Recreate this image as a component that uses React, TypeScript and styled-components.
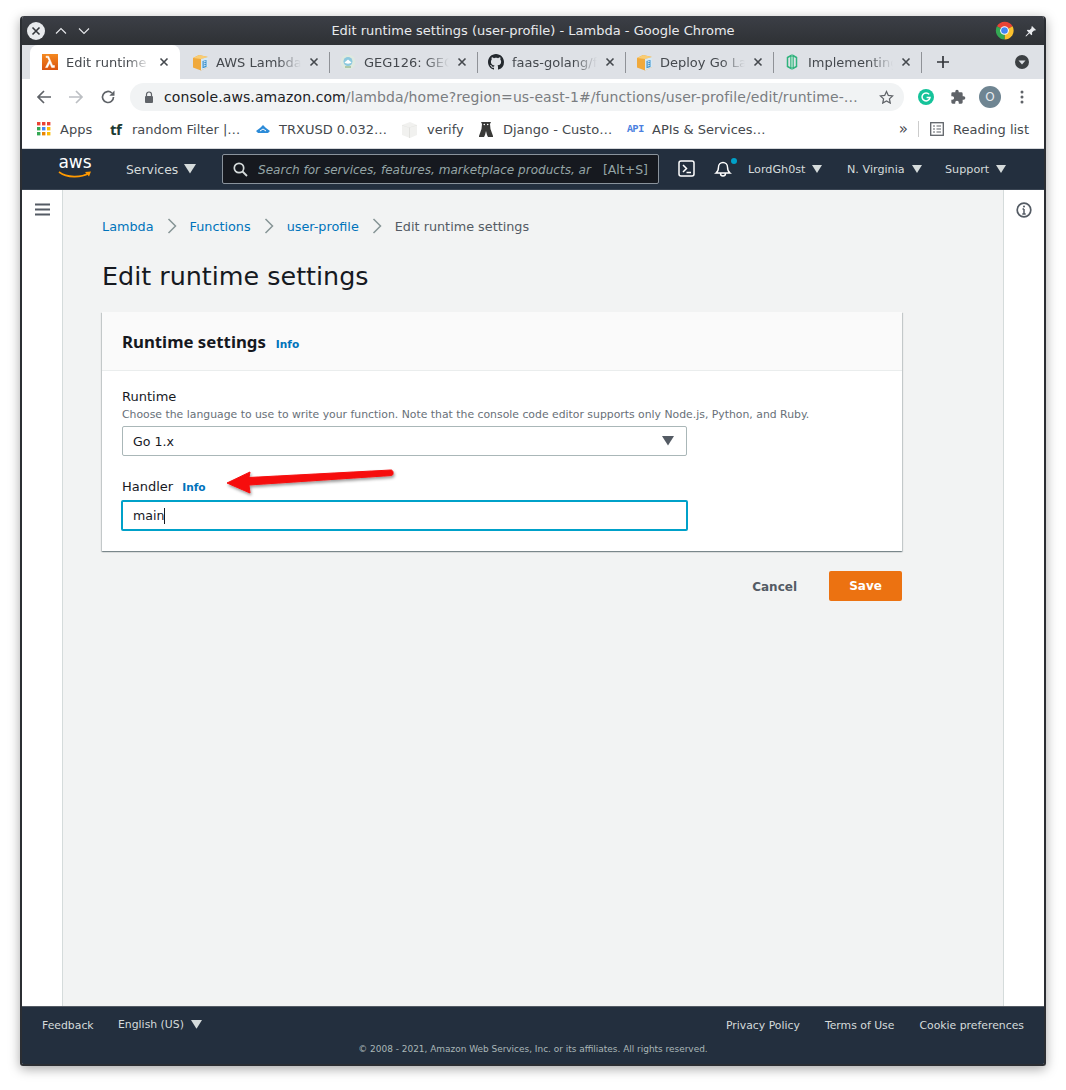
import React from "react";
import styled, { createGlobalStyle } from "styled-components";

const Global = createGlobalStyle`
  html, body { margin: 0; padding: 0; background: #fff; }
  body { font-family: "DejaVu Sans", sans-serif; }
  * { box-sizing: border-box; }
`;
const Page = styled.div`
  width: 1066px; height: 1090px; padding: 16px 20px 24px;
`;
const Shell = styled.div` border-radius: 4px; box-shadow: 0 3px 12px rgba(0,0,0,.35); width: 1026px; height: 1050px; `;
const Win = styled.div`
  width: 1026px; height: 1050px; display: flex; flex-direction: column;
  border: 2px solid #2b2e33; border-top: 0; border-radius: 4px 4px 3px 3px; overflow: hidden;
`;
const TitleBar = styled.div`
  height: 29px; flex: none; display: flex; align-items: center; padding: 0 7px 0 5px;
  background: linear-gradient(#3c3f46, #2e3135); color: #e8eaed; font-size: 13px;
`;
const TitleControls = styled.div` width: 170px; display: flex; align-items: center; gap: 9px; `;
const CloseCircle = styled.div`
  width: 18px; height: 18px; border-radius: 50%; background: #e8eaed; display: flex; align-items: center; justify-content: center;
`;
const TitleText = styled.div` flex: 1; text-align: center; white-space: nowrap; padding-left: 2px; `;
const TitleRight = styled.div` width: 170px; display: flex; justify-content: flex-end; align-items: center; gap: 11px; `;
const TabStrip = styled.div`
  height: 34px; flex: none; background: #dee1e6; display: flex; align-items: flex-end; padding-left: 8px; position: relative;
`;
const TabEl = styled.div<{ $active?: boolean }>`
  width: 148px; height: 34px; flex: none; display: flex; align-items: center; padding: 0 11px 0 10px; gap: 7px;
  font-size: 13px; color: #45494e; position: relative;
  background: ${p => (p.$active ? "#fff" : "transparent")};
  border-radius: ${p => (p.$active ? "8px 8px 0 0" : "0")};
  ${p => !p.$active && `&::after { content: ""; position: absolute; right: 0; top: 7px; height: 21px; width: 1px; background: #8f9297; }`}
`;
const TabFirst = styled(TabEl)` width: 150px; margin-right: 2px; padding: 0 11px 0 12px; gap: 8px; `;
const TabTitle = styled.span`
  flex: 1; overflow: hidden; white-space: nowrap; min-width: 0; margin-right: 1px;
  -webkit-mask-image: linear-gradient(90deg, #000 72%, transparent 100%);
  mask-image: linear-gradient(90deg, #000 72%, transparent 100%);
`;
const TabIcon = styled.span` width: 17px; height: 17px; flex: none; display: flex; align-items: center; `;
const TabTail = styled.div` flex: 1; display: flex; align-items: center; justify-content: space-between; height: 34px; padding: 0 14px 0 14px; `;
const Toolbar = styled.div` height: 36px; flex: none; background: #fff; display: flex; align-items: center; padding: 0 0 0 6px; `;
const NavIcon = styled.div` width: 32px; height: 32px; display: flex; align-items: center; justify-content: center; `;
const Omnibox = styled.div`
  width: 774px; height: 28px; margin-left: 6px; border-radius: 14px; background: #f1f3f4; display: flex; align-items: center;
  padding: 0 10px 0 14px; font-size: 14px; color: #7a7d81; white-space: nowrap;
`;
const UrlText = styled.span` flex: 1; margin-left: 10px; overflow: hidden; white-space: nowrap; letter-spacing: .1px; `;
const UrlHost = styled.span` color: #202124; `;
const ToolRight = styled.div` flex: 1; display: flex; align-items: center; padding-left: 6px; `;
const ToolCell = styled.div` width: 32px; display: flex; align-items: center; justify-content: center; `;
const Avatar = styled.div`
  width: 22px; height: 22px; border-radius: 50%; background: #6f8592; color: #e8eaed; font-size: 12px; display: flex; align-items: center; justify-content: center;
`;
const Bookmarks = styled.div`
  height: 34px; flex: none; background: #fff; display: flex; align-items: center; padding: 0 15px 5px 15px; font-size: 13px; color: #45494e;
  border-bottom: 1px solid #d5d7da;
`;
const Mark = styled.div<{ $w: number }>`
  width: ${p => p.$w}px; flex: none; display: flex; align-items: center; gap: 9px; white-space: nowrap;
`;
const TfLogo = styled.span` font-family: "Noto Sans", sans-serif; font-weight: 700; font-size: 15px; line-height: 14px; color: #1d3b33; width: 13px; letter-spacing: -.5px; `;
const ApiLogo = styled.span` font-family: "Liberation Mono", monospace; font-weight: 700; font-size: 10px; color: #4a7fe0; width: 16px; letter-spacing: -.4px; `;
const BookSpacer = styled.div` flex: 1; `;
const Chevrons = styled.span` font-size: 15px; margin-right: 10px; color: #45494e; `;
const BookDivider = styled.div` width: 1px; height: 16px; background: #ccc; margin-right: 11px; `;
const ReadingList = styled.div` display: flex; align-items: center; gap: 9px; `;
const AwsNav = styled.div`
  height: 41px; flex: none; background: #232f3e; border-bottom: 1px solid #3a4553; display: flex; align-items: center; color: #d5dbdb; font-size: 12px;
  padding-left: 36px;
`;
const AwsLogo = styled.div` width: 34px; height: 30px; display: flex; flex-direction: column; align-items: center; color: #fff; font-size: 17px; line-height: 17px; margin-top: -1px; `;
const Services = styled.div` margin-left: 34px; width: 96px; display: flex; align-items: center; gap: 6px; font-size: 12.4px; `;
const Search = styled.div`
  width: 437px; height: 30px; border: 1px solid #8a939c; border-radius: 2px; background: #16191f; display: flex; align-items: center;
  padding: 0 10px; gap: 10px; color: #95a5a6; font-size: 12.5px; white-space: nowrap;
`;
const SearchText = styled.span` font-style: italic; flex: 1; overflow: hidden; font-size: 12.05px; padding-top: 1px; `;
const SearchKey = styled.span` padding-top: 1px; `;
const NavRight = styled.div` display: flex; align-items: center; flex: 1; padding-left: 19px; `;
const BellWrap = styled.div` position: relative; margin-left: 18px; width: 20px; height: 20px; display: flex; `;
const Dot = styled.div` position: absolute; right: -3px; top: -1px; width: 6px; height: 6px; border-radius: 50%; background: #00a1c9; `;
const NavItem = styled.div<{ $w: number; $ml?: number }>` width: ${p => p.$w}px; margin-left: ${p => p.$ml ?? 0}px; display: flex; align-items: center; gap: 7px; font-size: 11.2px; `;
const Main = styled.div` flex: 1; display: flex; min-height: 0; `;
const LeftRail = styled.div` width: 41px; flex: none; background: #fff; border-right: 1px solid #d5dbdb; display: flex; justify-content: center; padding-top: 13px; `;
const RightRail = styled.div` width: 41px; flex: none; background: #fff; border-left: 1px solid #d5dbdb; display: flex; justify-content: center; padding-top: 12px; `;
const Content = styled.div` flex: 1; background: #f2f3f3; padding: 27px 39px; min-width: 0; `;
const Crumbs = styled.div` display: flex; align-items: center; font-size: 12.8px; height: 18px; color: #545b64; `;
const Crumb = styled.span` color: #0073bb; `;
const CrumbSep = styled.span` width: 36px; display: flex; justify-content: center; `;
const H1 = styled.h1` margin: 23px 0 0; font-size: 25.4px; font-weight: 400; color: #16191f; line-height: 36px; `;
const Card = styled.div` margin-top: 18px; width: 800px; background: #fff; box-shadow: 0 1px 1px 0 rgba(0,28,36,.3), 1px 1px 1px 0 rgba(0,28,36,.15), -1px 1px 1px 0 rgba(0,28,36,.15); position: relative; `;
const CardHead = styled.div` height: 59px; background: #fafafa; border-bottom: 1px solid #eaeded; display: flex; align-items: baseline; padding: 18px 0 0 20px; `;
const CardTitle = styled.div` font-family: "Noto Sans", sans-serif; font-size: 16.8px; font-weight: 700; color: #16191f; `;
const Info = styled.span<{ $ml: number }>` color: #0073bb; font-size: 10.6px; font-weight: 700; margin-left: ${p => p.$ml}px; `;
const CardBody = styled.div` padding: 17px 20px 20px; `;
const Label = styled.div` font-size: 13px; color: #16191f; line-height: 18px; display: flex; align-items: center; `;
const Hint = styled.div` font-size: 10.85px; color: #687078; line-height: 15px; margin-top: 1px; white-space: nowrap; `;
const SelectBox = styled.div`
  width: 565px; height: 30px; margin-top: 4px; border: 1px solid #aab7b8; border-radius: 2px; display: flex; align-items: center; justify-content: space-between;
  padding: 0 12px 0 10px; font-size: 12.6px; color: #16191f;
`;
const FieldGap = styled.div` height: 22px; `;
const InputBox = styled.div`
  width: 567px; height: 31px; margin: 4px 0 0 -1px; border: 2px solid #00a1c9; border-radius: 2px; display: flex; align-items: center;
  padding-left: 10px; font-size: 12.6px; color: #16191f;
`;
const Caret = styled.span` width: 1px; height: 16px; background: #16191f; `;
const Actions = styled.div` width: 800px; display: flex; justify-content: flex-end; align-items: center; margin-top: 20px; gap: 32px; `;
const Cancel = styled.span` font-size: 12px; font-weight: 700; color: #545b64; padding-top: 1px; `;
const Save = styled.div` width: 73px; height: 30px; background: #ec7211; border-radius: 2px; color: #fff; font-size: 12px; font-weight: 700; display: flex; align-items: center; justify-content: center; `;
const Arrow = styled.svg` position: absolute; left: 120px; top: 150px; `;
const Footer = styled.div` height: 58px; flex: none; background: #232f3e; border-top: 1px solid #545b64; color: #d5dbdb; font-size: 10.85px; padding: 0 20px; display: flex; flex-direction: column; `;
const FootTop = styled.div` display: flex; align-items: center; height: 36px; `;
const FeedBack = styled.span` margin-top: 1px; width: 76px; `;
const Lang = styled.div` display: flex; align-items: center; gap: 7px; flex: 1; margin-top: -1px; `;
const FootLinks = styled.div` display: flex; gap: 25px; `;
const Copy = styled.div` text-align: center; font-size: 8.95px; color: #aab7b8; margin-top: 1px; `;

const Tri = ({ s = 12, c = "#d5dbdb" }: { s?: number; c?: string }) => (
  <svg width={s} height={s * 0.8} viewBox="0 0 10 8"><path d="M0 0h10L5 8z" fill={c} /></svg>
);
const X = ({ c = "#45494e" }: { c?: string }) => (
  <svg width="10" height="10" viewBox="0 0 10 10" style={{ flex: "none" }}><path d="M1.500 1.500l7 7m0-7l-7 7" stroke={c} strokeWidth="1.600" /></svg>
);
const Box = () => (
  <svg width="17" height="17" viewBox="0 0 17 17">
    <path d="M1 4l6-3 9 2v10l-7 3.500-8-3z" fill="#f0a93c" />
    <path d="M1 4l6-3 9 2-7 2z" fill="#f9cd74" />
    <path d="M9 5l7-2v10l-7 3.500z" fill="#d5e8f5" />
    <path d="M10.500 7l4-1v7l-4 1.300z" fill="#3d91cc" />
    <path d="M11.500 8l2-.5M11.500 10l2-.5M11.500 12l2-.5" stroke="#fff" strokeWidth=".9" />
  </svg>
);
const Tab = ({ icon, title }: { icon: React.ReactNode; title: string }) => (
  <TabEl><TabIcon>{icon}</TabIcon><TabTitle>{title}</TabTitle><X /></TabEl>
);
function Chev() {
  return <svg width="10" height="16" viewBox="0 0 10 16"><path d="M1.500 1l7 7-7 7" fill="none" stroke="#879596" strokeWidth="1.500" /></svg>;
}

export default function App() {
  return (
    <Page>
      <Global />
      <Shell>
        <Win>
          <TitleBar>
            <TitleControls>
              <CloseCircle><X c="#33363b" /></CloseCircle>
              <svg width="14" height="10" viewBox="0 0 14 10"><path d="M2 7.500l5-5 5 5" fill="none" stroke="#e8eaed" strokeWidth="1.100" /></svg>
              <svg width="14" height="10" viewBox="0 0 14 10"><path d="M2 2.500l5 5 5-5" fill="none" stroke="#e8eaed" strokeWidth="1.100" /></svg>
            </TitleControls>
            <TitleText>Edit runtime settings (user-profile) - Lambda - Google Chrome</TitleText>
            <TitleRight>
              <svg width="19" height="19" viewBox="0 0 20 20">
                <path d="M10 10L2 5.500A9.500 9.500 0 0 1 18.500 5.500z" fill="#ea4335" />
                <path d="M10 10l8.500-4.500A9.500 9.500 0 0 1 10 19.500z" fill="#fbc02d" />
                <path d="M10 10v9.500A9.500 9.500 0 0 1 2 5.500z" fill="#34a853" />
                <circle cx="10" cy="10" r="4.600" fill="#fff" /><circle cx="10" cy="10" r="3.500" fill="#4285f4" />
              </svg>
              <svg width="12" height="12" viewBox="0 0 12 12"><path d="M7 1l4 4-1 .6-1-.2-2 2 .2 2-.8.8-2-2-3 3-.8.2.2-.8 3-3-2-2 .8-.8 2 .2 2-2-.2-1z" fill="#e8eaed" /></svg>
            </TitleRight>
          </TitleBar>
          <TabStrip>
            <TabFirst $active>
              <svg width="16" height="16" viewBox="0 0 16 16" style={{ flex: "none" }}>
                <defs><linearGradient id="lam" x1="0" y1="0" x2="0" y2="1"><stop offset="0" stopColor="#f5891f" /><stop offset="1" stopColor="#d9530f" /></linearGradient></defs>
                <rect width="16" height="16" fill="url(#lam)" />
                <path d="M3.500 13.500l3.500-6.800L5.600 3.500H4V2.200h2.600l4 9.300H12.500v1.900H9.600L7.800 9 5.500 13.500z" fill="#fff" stroke="#fff" strokeWidth=".5" />
              </svg>
              <TabTitle>Edit runtime settings</TabTitle><X />
            </TabFirst>
            <Tab icon={<Box />} title="AWS Lambda" />
            <Tab icon={<svg width="16" height="16" viewBox="0 0 16 16"><circle cx="8" cy="8" r="7.500" fill="#dfe9e0" /><circle cx="8" cy="7.500" r="4.500" fill="#8cc9de" /><path d="M4.500 8.500c1.500 1.500 5.500 1.500 7 0l-3.500-3z" fill="#fff" /><path d="M5 13h6" stroke="#7fa86f" /></svg>} title="GEG126: GEG" />
            <Tab icon={<svg width="16" height="16" viewBox="0 0 16 16"><path fill="#24292e" d="M8 0C3.580 0 0 3.580 0 8c0 3.540 2.290 6.530 5.470 7.590.4.07.55-.17.55-.38 0-.19-.01-.82-.01-1.490-2.010.37-2.530-.49-2.690-.94-.09-.23-.48-.94-.82-1.130-.28-.15-.68-.52-.01-.53.63-.01 1.080.58 1.230.82.72 1.210 1.870.87 2.330.66.07-.52.28-.87.51-1.070-1.780-.2-3.640-.89-3.640-3.950 0-.87.31-1.590.82-2.150-.08-.2-.36-1.020.08-2.120 0 0 .67-.21 2.200.82.64-.18 1.320-.27 2-.27s1.360.09 2 .27c1.530-1.040 2.200-.82 2.200-.82.44 1.100.16 1.920.08 2.120.51.56.82 1.270.82 2.150 0 3.070-1.870 3.750-3.650 3.950.29.25.54.73.54 1.480 0 1.070-.01 1.930-.01 2.200 0 .21.15.46.55.38A8.010 8.010 0 0 0 16 8c0-4.420-3.580-8-8-8z" /></svg>} title="faas-golang/f" />
            <Tab icon={<Box />} title="Deploy Go La" />
            <Tab icon={<svg width="16" height="16" viewBox="0 0 16 16"><path d="M3.500 3.500L7 1.500v13l-3.500-2zM9 1.500l3.500 2v9L9 14.500z" fill="none" stroke="#2fb37c" strokeWidth="1.500" /><path d="M7 3h2v10H7z" fill="#8fd8b8" /></svg>} title="Implementing" />
            <TabTail>
              <svg width="14" height="14" viewBox="0 0 14 14"><path d="M7 1v12M1 7h12" stroke="#33363b" strokeWidth="1.700" /></svg>
              <svg width="16" height="16" viewBox="0 0 16 16"><circle cx="8" cy="8" r="7" fill="#3c4043" /><path d="M4.500 6.500h7L8 10.500z" fill="#dee1e6" /></svg>
            </TabTail>
          </TabStrip>
          <Toolbar>
            <NavIcon><svg width="16" height="16" viewBox="0 0 16 16"><path d="M15 8H2M8 2L2 8l6 6" fill="none" stroke="#5f6368" strokeWidth="1.700" /></svg></NavIcon>
            <NavIcon><svg width="16" height="16" viewBox="0 0 16 16"><path d="M1 8h13M8 2l6 6-6 6" fill="none" stroke="#bcbfc3" strokeWidth="1.700" /></svg></NavIcon>
            <NavIcon><svg width="16" height="16" viewBox="0 0 16 16"><path d="M13.500 8A5.500 5.500 0 1 1 11.800 4" fill="none" stroke="#5f6368" strokeWidth="1.700" /><path d="M14.500 1.500v5.200H9.300z" fill="#5f6368" /></svg></NavIcon>
            <Omnibox>
              <svg width="10" height="13" viewBox="0 0 10 13" style={{ flex: "none" }}><path d="M2.500 5V3.500a2.500 2.500 0 0 1 5 0V5" fill="none" stroke="#5f6368" strokeWidth="1.200" /><rect x="1" y="5" width="8" height="7" rx="1" fill="#5f6368" /></svg>
              <UrlText><UrlHost>console.aws.amazon.com</UrlHost>/lambda/home?region=us-east-1#/functions/user-profile/edit/runtime-…</UrlText>
              <svg width="15" height="15" viewBox="0 0 24 24" style={{ flex: "none" }}><path d="M12 2.500l2.900 6.200 6.800.8-5 4.700 1.300 6.800-6-3.400-6 3.400 1.300-6.800-5-4.700 6.800-.8z" fill="none" stroke="#5f6368" strokeWidth="2" /></svg>
            </Omnibox>
            <ToolRight>
              <ToolCell><svg width="16" height="16" viewBox="0 0 16 16"><circle cx="8" cy="8" r="8" fill="#15c39a" /><path d="M11.200 5.400A4 4 0 1 0 12 8.600H8.600" fill="none" stroke="#fff" strokeWidth="1.500" /></svg></ToolCell>
              <ToolCell><svg width="16" height="16" viewBox="0 0 24 24"><path fill="#5f6368" d="M20.500 11H19V7a2 2 0 0 0-2-2h-4V3.500a2.500 2.500 0 0 0-5 0V5H4a2 2 0 0 0-2 2v3.800h1.500a2.700 2.700 0 0 1 0 5.400H2V20a2 2 0 0 0 2 2h3.800v-1.500a2.700 2.700 0 0 1 5.400 0V22H17a2 2 0 0 0 2-2v-4h1.500a2.500 2.500 0 0 0 0-5z" /></svg></ToolCell>
              <ToolCell><Avatar>O</Avatar></ToolCell>
              <ToolCell><svg width="4" height="14" viewBox="0 0 4 14"><circle cx="2" cy="2" r="1.500" fill="#5f6368" /><circle cx="2" cy="7" r="1.500" fill="#5f6368" /><circle cx="2" cy="12" r="1.500" fill="#5f6368" /></svg></ToolCell>
            </ToolRight>
          </Toolbar>
          <Bookmarks>
            <Mark $w={73}>
              <svg width="14" height="14" viewBox="0 0 14 14">
                {[0, 5, 10].flatMap(y => [0, 5, 10].map(x => (
                  <rect key={`${x}-${y}`} x={x} y={y} width="3.400" height="3.400" fill={y === 0 ? "#ea4335" : y === 5 ? (x === 0 ? "#34a853" : x === 5 ? "#4285f4" : "#fbbc04") : (x === 0 ? "#34a853" : x === 5 ? "#ea8600" : "#fbbc04")} />
                )))}
              </svg>
              Apps
            </Mark>
            <Mark $w={146}><TfLogo>tf</TfLogo>random Filter |…</Mark>
            <Mark $w={145}><svg width="14" height="10" viewBox="0 0 14 10"><path d="M0 7l4-3 3-3 3 3 4 3-2 2H2z" fill="#2c8bd8" /><path d="M4 7l3-2 3 2" stroke="#fff" fill="none" /></svg>TRXUSD 0.032…</Mark>
            <Mark $w={77}><svg width="17" height="17" viewBox="0 0 17 17"><path d="M1 4l8-3 7 3v10l-7 3-8-3z" fill="#f1f1ef" /><path d="M1 4l7 2.500L16 4v.5l-7 2v10.500h-1V6.800L1 4.500z" fill="#e2e2df" /></svg>verify</Mark>
            <Mark $w={149}><svg width="16" height="17" viewBox="0 0 16 17"><path d="M3 1h10l-1 2 .5 5 2.500 7v1h-5l-1-2-1-4-1 4-1 2H1v-1l2.500-7L4 3z" fill="#3a3a38" /><circle cx="6.300" cy="3.500" r=".8" fill="#fff" /><circle cx="9.700" cy="3.500" r=".8" fill="#fff" /></svg>Django - Custo…</Mark>
            <Mark $w={150}><ApiLogo>API</ApiLogo>APIs &amp; Services…</Mark>
            <BookSpacer />
            <Chevrons>»</Chevrons>
            <BookDivider />
            <ReadingList>
              <svg width="14" height="14" viewBox="0 0 14 14"><rect x=".7" y=".7" width="12.600" height="12.600" fill="none" stroke="#5f6368" strokeWidth="1.300" /><path d="M3 4h2M6.500 4H11M3 7h2M6.500 7H11M3 10h2M6.500 10H11" stroke="#5f6368" strokeWidth="1.200" /></svg>
              Reading list
            </ReadingList>
          </Bookmarks>
          <AwsNav>
            <AwsLogo>aws
              <svg width="34" height="8" viewBox="0 0 34 8" style={{ marginTop: 0 }}><path d="M1 1c8 6 22 6 30 1" fill="none" stroke="#f90" strokeWidth="1.600" /><path d="M27 1l6-.5-2 5z" fill="#f90" /></svg>
            </AwsLogo>
            <Services>Services <Tri /></Services>
            <Search>
              <svg width="15" height="15" viewBox="0 0 15 15" style={{ flex: "none" }}><circle cx="6" cy="6" r="4.700" fill="none" stroke="#d5dbdb" strokeWidth="1.700" /><path d="M9.500 9.500l4.500 4.500" stroke="#d5dbdb" strokeWidth="1.800" /></svg>
              <SearchText>Search for services, features, marketplace products, ar</SearchText>
              <SearchKey>[Alt+S]</SearchKey>
            </Search>
            <NavRight>
              <svg width="18" height="18" viewBox="0 0 18 18"><rect x="1" y="1" width="15" height="15" rx="2" fill="none" stroke="#fff" strokeWidth="1.500" /><path d="M5 5l3.500 3.500L5 12M8.500 12.500H13" fill="none" stroke="#fff" strokeWidth="1.500" /></svg>
              <BellWrap>
                <svg width="18" height="18" viewBox="0 0 18 18"><path d="M2 14c2-1.500 2.500-3 2.500-6a4.500 4.500 0 0 1 9 0c0 3 .5 4.500 2.500 6zM6.500 14.500a2.500 2.500 0 0 0 5 0" fill="none" stroke="#fff" strokeWidth="1.400" /></svg>
                <Dot />
              </BellWrap>
              <NavItem $w={99} $ml={14}>LordGh0st <Tri s={10} /></NavItem>
              <NavItem $w={98}>N. Virginia <Tri s={10} /></NavItem>
              <NavItem $w={70}>Support <Tri s={10} /></NavItem>
            </NavRight>
          </AwsNav>
          <Main>
            <LeftRail>
              <svg width="15" height="13" viewBox="0 0 15 13"><path d="M0 1.500h15M0 6.500h15M0 11.500h15" stroke="#545b64" strokeWidth="1.800" /></svg>
            </LeftRail>
            <Content>
              <Crumbs>
                <Crumb>Lambda</Crumb><CrumbSep><Chev /></CrumbSep>
                <Crumb>Functions</Crumb><CrumbSep><Chev /></CrumbSep>
                <Crumb>user-profile</Crumb><CrumbSep><Chev /></CrumbSep>
                <span>Edit runtime settings</span>
              </Crumbs>
              <H1>Edit runtime settings</H1>
              <Card>
                <CardHead><CardTitle>Runtime settings</CardTitle><Info $ml={10}>Info</Info></CardHead>
                <CardBody>
                  <Label>Runtime</Label>
                  <Hint>Choose the language to use to write your function. Note that the console code editor supports only Node.js, Python, and Ruby.</Hint>
                  <SelectBox>Go 1.x <Tri s={12} c="#545b64" /></SelectBox>
                  <FieldGap />
                  <Label>Handler<Info $ml={9}>Info</Info></Label>
                  <InputBox>main<Caret /></InputBox>
                </CardBody>
                <Arrow width="180" height="40" viewBox="0 0 180 40">
                  <defs><filter id="sh" x="-10%" y="-30%" width="120%" height="170%"><feDropShadow dx="1" dy="2" stdDeviation="1.500" floodColor="#000" floodOpacity=".4" /></filter></defs>
                  <path d="M5 21L28 10l-1 5.500L169 8c2.500 0 3 5 .5 5.500L27 23l1 8z" fill="#f60f0f" stroke="#f60f0f" strokeWidth="1" strokeLinejoin="round" filter="url(#sh)" />
                </Arrow>
              </Card>
              <Actions><Cancel>Cancel</Cancel><Save>Save</Save></Actions>
            </Content>
            <RightRail>
              <svg width="16" height="16" viewBox="0 0 16 16"><circle cx="8" cy="8" r="6.800" fill="none" stroke="#545b64" strokeWidth="1.700" /><path d="M8 7v5M6.300 12h3.400M6.500 7H8" stroke="#545b64" strokeWidth="1.500" /><circle cx="8" cy="4.500" r="1" fill="#545b64" /></svg>
            </RightRail>
          </Main>
          <Footer>
            <FootTop>
              <FeedBack>Feedback</FeedBack>
              <Lang>English (US) <Tri s={11} /></Lang>
              <FootLinks><span>Privacy Policy</span><span>Terms of Use</span><span>Cookie preferences</span></FootLinks>
            </FootTop>
            <Copy>© 2008 - 2021, Amazon Web Services, Inc. or its affiliates. All rights reserved.</Copy>
          </Footer>
        </Win>
      </Shell>
    </Page>
  );
}
